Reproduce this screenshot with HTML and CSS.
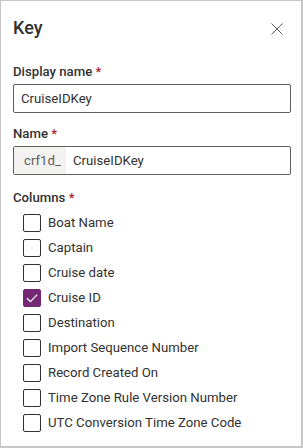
FILE: index.html
```html
<!DOCTYPE html>
<html lang="en">
  <head>
    <meta charset="utf-8" />
    <meta name="viewport" content="width=device-width, initial-scale=1" />
    <link rel="stylesheet" href="styles.css">
    <title>Key</title>
  </head>
  <body>
    <aside class="panel">
      <header class="panel-header">
        <h1 class="panel-title">Key</h1>
        <button class="close-button" type="button" aria-label="Close">
          <svg width="12" height="12" viewBox="0 0 12 12" aria-hidden="true">
            <path d="M0.5 0.5 L11.5 11.5 M11.5 0.5 L0.5 11.5" />
          </svg>
        </button>
      </header>

      <div class="field">
        <label class="field-label required" for="display-name">Display name</label>
        <div class="text-box">
          <input id="display-name" class="text-input" type="text" value="CruiseIDKey" />
        </div>
      </div>

      <div class="field">
        <label class="field-label required" for="name">Name</label>
        <div class="text-box">
          <span class="prefix">crf1d_</span>
          <input id="name" class="text-input with-prefix" type="text" value="CruiseIDKey" />
        </div>
      </div>

      <div class="field">
        <span class="field-label required">Columns</span>
        <ul class="checklist">
          <li class="check-row"><span class="check-box"></span>Boat Name</li>
          <li class="check-row"><span class="check-box"></span>Captain</li>
          <li class="check-row"><span class="check-box"></span>Cruise date</li>
          <li class="check-row">
            <span class="check-box is-checked">
              <svg width="18" height="18" viewBox="0 0 18 18" aria-hidden="true">
                <path d="M4 9.2 L7.4 12.6 L14.2 5.6" />
              </svg>
            </span>Cruise ID
          </li>
          <li class="check-row"><span class="check-box"></span>Destination</li>
          <li class="check-row"><span class="check-box"></span>Import Sequence Number</li>
          <li class="check-row"><span class="check-box"></span>Record Created On</li>
          <li class="check-row"><span class="check-box"></span>Time Zone Rule Version Number</li>
          <li class="check-row"><span class="check-box"></span>UTC Conversion Time Zone Code</li>
        </ul>
      </div>
    </aside>
  </body>
</html>
```

FILE: styles.css
```css
:root {
  --text: #323130;
  --text-soft: #605e5c;
  --border: #605e5c;
  --frame: #c8c6c4;
  --required: #a4262c;
  --accent: #742774;
}

* {
  box-sizing: border-box;
}

body {
  margin: 0;
  background: #fff;
}

.panel {
  width: 303px;
  height: 448px;
  border: 1px solid var(--frame);
  border-right-width: 2px;
  border-bottom-width: 2px;
  padding: 0 10px 0 12px;
  font-family: Roboto, "Liberation Sans", sans-serif;
  font-size: 13.2px;
  color: var(--text);
  overflow: hidden;
}

/* header keeps the title's height; the close button hangs over it */
.panel-header {
  display: flex;
  align-items: center;
  justify-content: space-between;
  height: 39px;
  padding-top: 15px;
}

.panel-title {
  margin: 0;
  font-size: 18px;
  font-weight: 500;
  line-height: 24px;
}

.close-button {
  display: grid;
  place-items: center;
  width: 28px;
  height: 28px;
  margin-top: 2px;
  padding: 0;
  border: 0;
  background: none;

  & path {
    fill: none;
    stroke: var(--text-soft);
    stroke-width: 1;
  }
}

.field {
  margin-top: 12px;

  &:first-of-type {
    margin-top: 23px;
  }

  &:last-of-type {
    margin-top: 14px;
  }
}

.field-label {
  display: block;
  font-weight: 500;
  line-height: 18px;
  margin-bottom: 3px;
}

.required::after {
  content: " *";
  color: var(--required);
}

.text-box {
  display: flex;
  height: 29px;
  border: 1px solid var(--border);
  border-radius: 2px;
  overflow: hidden;
}

.prefix {
  display: flex;
  align-items: center;
  width: 52px;
  flex: none;
  padding-left: 10px;
  background: #f3f2f1;
  color: var(--text-soft);
}

.text-input {
  flex: 1;
  min-width: 0;
  border: 0;
  padding: 0 7px;
  font: inherit;
  color: var(--text);
  background: none;
  outline: none;
}

.checklist {
  list-style: none;
  margin: 7px 0 0;
  padding: 0 0 0 10px;
  display: flex;
  flex-direction: column;
  gap: 7px;
}

.check-row {
  display: flex;
  align-items: center;
  line-height: 18px;
}

.check-box {
  width: 18px;
  height: 18px;
  flex: none;
  margin-right: 7px;
  border: 1px solid var(--text);
  border-radius: 2px;

  &.is-checked {
    background: var(--accent);
    border-color: var(--accent);
  }

  & svg {
    display: block;
    margin: -1px;
  }

  & path {
    fill: none;
    stroke: #fff;
    stroke-width: 1.3;
  }
}
```
